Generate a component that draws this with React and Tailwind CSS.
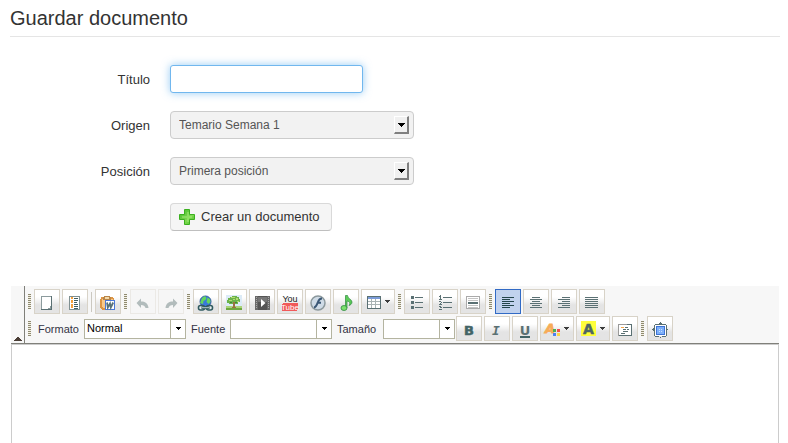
import React from "react";

const INK = "#5a7073";

function Icon({ w = 24, children }) {
  return (
    <svg
      width={w}
      height="23"
      viewBox={`1 1 ${w} 23`}
      className="block shrink-0"
      shapeRendering="crispEdges"
      aria-hidden="true"
    >
      {children}
    </svg>
  );
}

function ToolButton({ label, wide, active, disabled, children }) {
  const look = active
    ? "border-[#316ac5] bg-[#c1d2ee]"
    : disabled
      ? "border-[#ebe9e5] bg-[#f6f6f6]"
      : "border-[#d8d3c8] bg-linear-to-b from-[#ffffff] from-30% via-[#f1f1f1] via-50% to-[#e4e4e4] to-65%";
  return (
    <button
      type="button"
      aria-label={label}
      title={label}
      disabled={disabled}
      className={`h-[25px] shrink-0 border ${wide ? "w-[34px]" : "w-[26px]"} ${look}`}
    >
      <Icon w={wide ? 32 : 24}>{children}</Icon>
    </button>
  );
}

function Grip() {
  return (
    <span className="h-[15px] w-[3px] shrink-0 bg-[repeating-linear-gradient(to_bottom,#8f8a70_0,#8f8a70_1px,#f3f1e6_1px,#f3f1e6_2px)]" />
  );
}

function Group({ children }) {
  return (
    <div className="flex items-center gap-[3px]">
      <Grip />
      <div className="flex items-center gap-[2px]">{children}</div>
    </div>
  );
}

function MenuArrow() {
  return (
    <g fill="#3c3c3c">
      <rect x="24" y="11" width="5" height="1" />
      <rect x="25" y="12" width="3" height="1" />
      <rect x="26" y="13" width="1" height="1" />
    </g>
  );
}

function Lines({ rows }) {
  return rows.map(([x, w], i) => (
    <rect key={i} x={x} y={8 + i * 2} width={w} height="1" />
  ));
}

function FormRow({ label, id, children }) {
  return (
    <div className="flex items-center">
      <label htmlFor={id} className="w-[140px] shrink-0 pt-[2px] text-right text-[13px] leading-[18px] text-[#333333]">
        {label}
      </label>
      <div className="ml-5 min-w-0">{children}</div>
    </div>
  );
}

function FormSelect({ id, value }) {
  return (
    <div className="relative w-[244px]">
      <select
        id={id}
        className="block h-7 w-full appearance-none rounded border border-[#cccccc] bg-[#f2f2f2] pr-6 pl-2 text-[12px] text-[#555555]"
      >
        <option>{value}</option>
      </select>
      <span className="pointer-events-none absolute top-[5px] right-[5px] flex h-[18px] w-[15px] items-center justify-center border-t border-r-2 border-b-2 border-l border-t-white border-r-[#808080] border-b-[#808080] border-l-white bg-[#f0f0f0]">
        <SmallArrow w={7} />
      </span>
    </div>
  );
}

function SmallArrow({ w = 5 }) {
  const h = (w + 1) / 2;
  return (
    <svg width={w} height={h} viewBox={`0 0 ${w} ${h}`} shapeRendering="crispEdges" aria-hidden="true">
      {Array.from({ length: h }, (_, i) => (
        <rect key={i} x={i} y={i} width={w - i * 2} height="1" fill="#000" />
      ))}
    </svg>
  );
}

function ToolSelect({ id, label, value, labelWidth, width }) {
  return (
    <div className="flex items-center">
      <label htmlFor={id} className={`${labelWidth} shrink-0 pt-px text-[11px] text-[#333344]`}>
        {label}
      </label>
      <div className={`relative ${width}`}>
        <select
          id={id}
          className="block h-5 w-full appearance-none border border-[#b4b4a0] bg-white pr-4 pl-[2px] text-[11px] text-black"
        >
          <option>{value}</option>
        </select>
        <span className="pointer-events-none absolute top-px right-px bottom-px flex w-[15px] items-center justify-center border-l border-[#b4b4a0]">
          <SmallArrow />
        </span>
      </div>
    </div>
  );
}

export default function App() {
  return (
    <main className="min-h-screen bg-white pr-2 pl-[10px] font-['Liberation_Sans',Arial,sans-serif]">
      <h1 className="h-[37px] border-b border-[#e5e5e5] text-[20px] leading-9 text-[#333333]">
        Guardar documento
      </h1>

      <form className="flex flex-col gap-[18px] pt-7" onSubmit={(e) => e.preventDefault()}>
        <FormRow label="Título" id="titulo">
          <input
            id="titulo"
            type="text"
            className="block h-7 w-[193px] rounded-[3px] border border-[#71b7ee] bg-white px-1 text-[13px] shadow-[0_0_8px_rgba(82,168,236,0.6)] outline-none"
          />
        </FormRow>
        <FormRow label="Origen" id="origen">
          <FormSelect id="origen" value="Temario Semana 1" />
        </FormRow>
        <FormRow label="Posición" id="posicion">
          <FormSelect id="posicion" value="Primera posición" />
        </FormRow>
        <div className="pl-40">
          <button
            type="submit"
            className="flex h-7 items-center gap-[6px] rounded border border-[#d9d9d9] border-b-[#bfbfbf] bg-[#f5f5f5] pr-[11px] pl-2 text-[13px] text-[#333333]"
          >
            <svg width="16" height="16" viewBox="0 0 16 16" aria-hidden="true">
              <defs>
                <linearGradient id="plus" x1="0" y1="0" x2="1" y2="1">
                  <stop offset="0" stopColor="#3fb828" />
                  <stop offset="0.6" stopColor="#7ed950" />
                  <stop offset="1" stopColor="#45bb2a" />
                </linearGradient>
              </defs>
              <path d="M5.500.5h5v5h5v5h-5v5h-5v-5h-5v-5h5z" fill="url(#plus)" stroke="#3bb01f" />
              <path d="M9 3v5H3M9 8h4M9 8v5" fill="none" stroke="#a4ea78" strokeWidth="2" opacity=".5" />
            </svg>
            Crear un documento
          </button>
        </div>
      </form>

      <section className="mt-[55px] mr-px ml-px" aria-label="Editor">
        <div className="flex border-b border-[#80807a] bg-[#f7f7f7]">
          <button type="button" aria-label="Contraer barra" className="flex w-[14px] shrink-0 items-end justify-center border-r border-[#80807a] pb-[2px]">
            <svg width="8" height="4" viewBox="0 0 8 4" shapeRendering="crispEdges" aria-hidden="true">
              <path d="M3 0h2v1h1v1h1v1h1v1H0V3h1V2h1V1h1z" fill="#4a3d35" />
            </svg>
          </button>
          <div className="flex min-w-0 flex-col gap-[2px] pt-[3px] pb-[2px] pl-[3px]">
            <div className="flex items-center gap-[3px]">
              <Group>
                <ToolButton label="Nueva página">
                  <path d="M7 7h11v14H7z" fill={INK} />
                  <path d="M8 8h9v12H8z" fill="#fff" />
                  <path d="M16 17h1v3h-3v-1h2z" fill="#8c9b9d" />
                  <path d="M7 7h10v1H7zM7 8h1v12H7z" fill="#8c9b9d" />
                </ToolButton>
                <ToolButton label="Plantillas">
                  <path d="M7 7h11v14H7z" fill="#7f9092" />
                  <path d="M8 8h9v12H8z" fill="#fff" />
                  <path d="M9 8h2v2H9zM9 11h2v3H9zM9 15h2v4H9z" fill="#f5a03c" />
                  <path d="M12 9h4v1h-4zM12 11h4v1h-4zM12 13h3v1h-3zM12 15h4v1h-4zM12 17h4v1h-4zM12 19h4v1h-4z" fill="#3f5d61" />
                </ToolButton>
                <span className="mx-px h-5 w-px bg-[#cbc8c0]" />
                <ToolButton label="Pegar desde Word">
                  <path d="M6 8h12v1h1v12H7v-1H6v-1H5V10h1z" fill="#dd9544" />
                  <path d="M7 10h11v9H8v-1H7z" fill="#f8c88a" />
                  <path d="M9 7h6v1h1v3H8V8h1z" fill="#b98548" />
                  <path d="M10 8h4v2h-4z" fill="#f3d9a8" />
                  <path d="M10 11h10v10H10z" fill="#4b79d8" />
                  <path d="M11 12h8v8h-8z" fill="#fff" />
                  <path d="M12 13.500l.8 5 2.200-4 .8 4 2.400-5" fill="none" stroke="#5b7378" strokeWidth="1.800" shapeRendering="auto" />
                </ToolButton>
              </Group>
              <Group>
                <ToolButton label="Deshacer" disabled>
                  <path d="M6.500 14L11 9.500v3c4 0 7 1.500 7.500 6.500h-3c-.5-2-2-3-4.500-3v3z" fill="#b2bcbc" shapeRendering="auto" />
                </ToolButton>
                <ToolButton label="Rehacer" disabled>
                  <path d="M19.500 14L15 9.500v3c-4 0-7 1.500-7.500 6.500h3c.5-2 2-3 4.500-3v3z" fill="#b2bcbc" shapeRendering="auto" />
                </ToolButton>
              </Group>
              <Group>
                <ToolButton label="Insertar vínculo">
                  <g shapeRendering="auto">
                    <circle cx="12.500" cy="12.500" r="5.500" fill="#3979dc" stroke="#315a9c" />
                    <path d="M9 9l3-2 1.500 2-1 2-2 1-.5 3-3-1zM14.500 8.500l2.500 1.500.5 3-2 2-2-2z" fill="#65d65d" />
                    <rect x="5.500" y="16.500" width="6" height="4.500" rx="2" fill="#e4ecec" stroke="#315b60" strokeWidth="1.600" />
                    <rect x="13.500" y="16.500" width="6" height="4.500" rx="2" fill="#e4ecec" stroke="#315b60" strokeWidth="1.600" />
                    <path d="M8.500 18.700h8" stroke="#315b60" strokeWidth="3" />
                    <path d="M9 18.700h7" stroke="#b9cccc" strokeWidth="1" />
                  </g>
                </ToolButton>
                <ToolButton label="Insertar imagen">
                  <path d="M5 6h16v15H5z" fill="#dcebf7" />
                  <path d="M5 17h16v4H5z" fill="#a9d478" />
                  <path d="M5 19h16v2H5z" fill="#6fa83e" />
                  <path d="M12 13h2v4l1 2h-4l1-2z" fill="#9c7040" />
                  <path d="M9 8h2V7h5v1h2v2h1v3h-2v2h-3v-2h-2v2H8v-1H6v-3h1V9h2z" fill="#6bb34a" />
                  <path d="M10 8h4v1h-4zM8 11h3v1H8zM15 9h2v2h-2zM12 10h2v1h-2zM16 12h2v1h-2z" fill="#b4dc72" />
                  <path d="M9 13h2v1H9zM14 13h2v1h-2z" fill="#3f8a30" />
                </ToolButton>
                <ToolButton label="Insertar vídeo">
                  <path d="M6 7h15v14H6z" fill="#6a6a6a" />
                  <path d="M9 7h9v14H9z" fill="#555" />
                  <path d="M9 8h9v5H9z" fill="#777" />
                  <path d="M7 8h1v1H7zM7 10h1v1H7zM7 12h1v1H7zM7 14h1v1H7zM7 16h1v1H7zM7 18h1v1H7zM19 8h1v1h-1zM19 10h1v1h-1zM19 12h1v1h-1zM19 14h1v1h-1zM19 16h1v1h-1zM19 18h1v1h-1z" fill="#aaa" />
                  <path d="M12 10l4.500 4-4.500 4z" fill="#fff" shapeRendering="auto" />
                </ToolButton>
                <ToolButton label="YouTube">
                  <text x="13" y="13" textAnchor="middle" fontSize="9" fontFamily="Liberation Sans Narrow, Liberation Sans, sans-serif" fill="#222">You</text>
                  <rect x="5" y="14" width="16" height="8" rx="2" fill="#f15a5a" />
                  <text x="13" y="21" textAnchor="middle" fontSize="8" fontFamily="Liberation Sans Narrow, Liberation Sans, sans-serif" fill="#fff">Tube</text>
                </ToolButton>
                <ToolButton label="Insertar Flash">
                  <g shapeRendering="auto">
                    <circle cx="13" cy="14" r="7" fill="#cfdbe6" stroke="#8b989c" strokeWidth="1.500" />
                    <path d="M17 9.500c-3 0-3.500 2-4.300 4.200S11 18.300 9 18.500M12 13.800h4" fill="none" stroke="#3b5876" strokeWidth="2" />
                  </g>
                </ToolButton>
                <ToolButton label="Insertar audio">
                  <g shapeRendering="auto">
                    <path d="M12.500 6.500h2c0 3 4.500 4 4.500 6.500 0 2-1.500 3-3 3.500 2-3 0-4-2-4.500v7h-1.500z" fill="#5ccb58" stroke="#2d8a3c" strokeWidth=".7" />
                    <ellipse cx="11" cy="19" rx="3" ry="2.500" fill="#7be06c" stroke="#2d8a3c" strokeWidth=".8" />
                  </g>
                </ToolButton>
                <ToolButton label="Insertar tabla" wide>
                  <path d="M6 7h14v13H6z" fill={INK} />
                  <path d="M7 8h12v2H7z" fill="#7b9bd8" />
                  <path d="M7 10h12v9H7z" fill="#a9b3b4" />
                  <path d="M7 10h3v2H7zM11 10h3v2h-3zM15 10h4v2h-4zM7 13h3v2H7zM11 13h3v2h-3zM15 13h4v2h-4zM7 16h3v3H7zM11 16h3v3h-3zM15 16h4v3h-4z" fill="#fff" />
                  <MenuArrow />
                </ToolButton>
              </Group>
              <Group>
                <ToolButton label="Lista con viñetas">
                  <path d="M7 7h3v3H7zM7 12h3v3H7zM7 17h3v3H7zM11 8h8v1h-8zM11 13h8v1h-8zM11 18h8v1h-8z" fill={INK} />
                </ToolButton>
                <ToolButton label="Lista numerada">
                  <path d="M8 6h1v4h1v1H7v-1h1V8H7V7h1zM7 12h2v1h1v1H9v1h1v1H7v-1h1v-1h1v-1H7zM7 17h2v1h1v1H9v1h1v1H7v-1h2v-1H8v-1H7zM11 8h9v1h-9zM11 13h9v1h-9zM11 18h9v1h-9z" fill={INK} />
                </ToolButton>
                <ToolButton label="Línea horizontal">
                  <path d="M6 7h14v13H6z" fill="#aaa" />
                  <path d="M7 8h12v11H7z" fill="#fff" />
                  <path d="M8 9h10v1H8zM8 11h10v1H8zM8 16h10v1H8zM8 18h10v1H8z" fill="#c4c4c4" />
                  <path d="M8 13h10v2H8z" fill={INK} />
                </ToolButton>
              </Group>
              <Group>
                <ToolButton label="Alinear a la izquierda" active>
                  <g fill="#23454c"><Lines rows={[[7, 12], [7, 8], [7, 12], [7, 8], [7, 12], [7, 8]]} /></g>
                </ToolButton>
                <ToolButton label="Centrar">
                  <g fill={INK}><Lines rows={[[9, 8], [7, 12], [9, 8], [7, 12], [9, 8], [7, 12]]} /></g>
                </ToolButton>
                <ToolButton label="Alinear a la derecha">
                  <g fill={INK}><Lines rows={[[11, 8], [7, 12], [11, 8], [7, 12], [11, 8], [7, 12]]} /></g>
                </ToolButton>
                <ToolButton label="Justificar">
                  <g fill={INK}><Lines rows={[[6, 13], [6, 13], [6, 13], [6, 13], [6, 13], [6, 13]]} /></g>
                </ToolButton>
              </Group>
            </div>

            <div className="flex items-center gap-[3px]">
              <div className="flex items-center gap-px">
                <div className="flex items-center gap-[5px]">
                  <div className="flex items-center gap-[7px]">
                    <Grip />
                    <ToolSelect id="formato" label="Formato" value="Normal" labelWidth="w-[46px]" width="w-[102px]" />
                  </div>
                  <ToolSelect id="fuente" label="Fuente" value="" labelWidth="w-[39px]" width="w-[102px]" />
                  <ToolSelect id="tamano" label="Tamaño" value="" labelWidth="w-[46px]" width="w-[72px]" />
                </div>
                <div className="flex items-center gap-[2px]">
                  <ToolButton label="Negrita">
                    <text x="13" y="19" textAnchor="middle" fontSize="13" fontWeight="bold" fontFamily="DejaVu Sans, sans-serif" fill="#426366" stroke="#426366" strokeWidth=".5">B</text>
                  </ToolButton>
                  <ToolButton label="Cursiva">
                    <text x="12" y="19" textAnchor="middle" fontSize="13" fontWeight="bold" fontStyle="italic" fontFamily="DejaVu Sans Mono, monospace" fill={INK}>I</text>
                  </ToolButton>
                  <ToolButton label="Subrayado">
                    <text x="13" y="19" textAnchor="middle" fontSize="13" fontWeight="bold" fontFamily="DejaVu Sans, sans-serif" fill={INK}>U</text>
                    <path d="M8 20h10v2H8z" fill="#426366" />
                  </ToolButton>
                  <ToolButton label="Color de texto" wide>
                    <text x="10" y="17" textAnchor="middle" fontSize="13" fontWeight="bold" fontStyle="italic" fontFamily="DejaVu Sans, sans-serif" fill="#f7ac58" stroke="#f7ac58" strokeWidth=".8">A</text>
                    <path d="M13 13h3v3h-3z" fill="#4caf50" />
                    <path d="M17 13h3v3h-3z" fill="#f04e4e" />
                    <path d="M13 17h3v3h-3z" fill="#4a80f0" />
                    <path d="M17 17h3v3h-3z" fill="#fbd445" />
                    <MenuArrow />
                  </ToolButton>
                  <ToolButton label="Color de fondo" wide>
                    <path d="M5 5h15v15H5z" fill="#ffff3c" />
                    <text x="12.500" y="18" textAnchor="middle" fontSize="14" fontWeight="bold" fontFamily="DejaVu Sans, sans-serif" fill="#4e6765" stroke="#4e6765" strokeWidth=".5">A</text>
                    <MenuArrow />
                  </ToolButton>
                  <ToolButton label="Código fuente">
                    <path d="M6 8h14v12H6z" fill={INK} />
                    <path d="M6 8h9v1H6zM6 9h1v11H6z" fill="#9a9a9a" />
                    <path d="M7 9h12v10H7z" fill="#fff" />
                    <path d="M9 11h3v1H9z" fill="#f7a64a" />
                    <path d="M13 11h3v1h-3zM11 13h3v1h-3zM15 13h2v1h-2zM11 15h5v1h-5zM9 17h4v1H9z" fill={INK} />
                  </ToolButton>
                </div>
              </div>
              <Group>
                <ToolButton label="Maximizar">
                  <path d="M13 6h1v1h1v1h-3V7h1zM13 22h1v-1h1v-1h-3v1h1zM5 14h1v1h1v-3H6v1H5zM21 14h-1v1h-1v-3h1v1h1zM8 8h11v1h1v11h-1v1H8v-1H7V9h1z" fill={INK} />
                  <path d="M8 9h11v11H8z" fill="#fff" />
                  <path d="M9 10h9v9H9z" fill="#3d74d6" />
                  <path d="M10 11h7v7h-7z" fill="#7eb0fa" />
                  <path d="M12 13h1v1h-1zM14 13h1v1h-1zM12 15h1v1h-1zM14 15h1v1h-1z" fill="#c9e0ff" />
                </ToolButton>
              </Group>
            </div>
          </div>
        </div>
        <textarea
          aria-label="Contenido del documento"
          className="block h-[99px] w-full resize-none border border-b-0 border-[#cccccc] bg-white p-2 text-[13px] outline-none"
        />
      </section>
    </main>
  );
}
